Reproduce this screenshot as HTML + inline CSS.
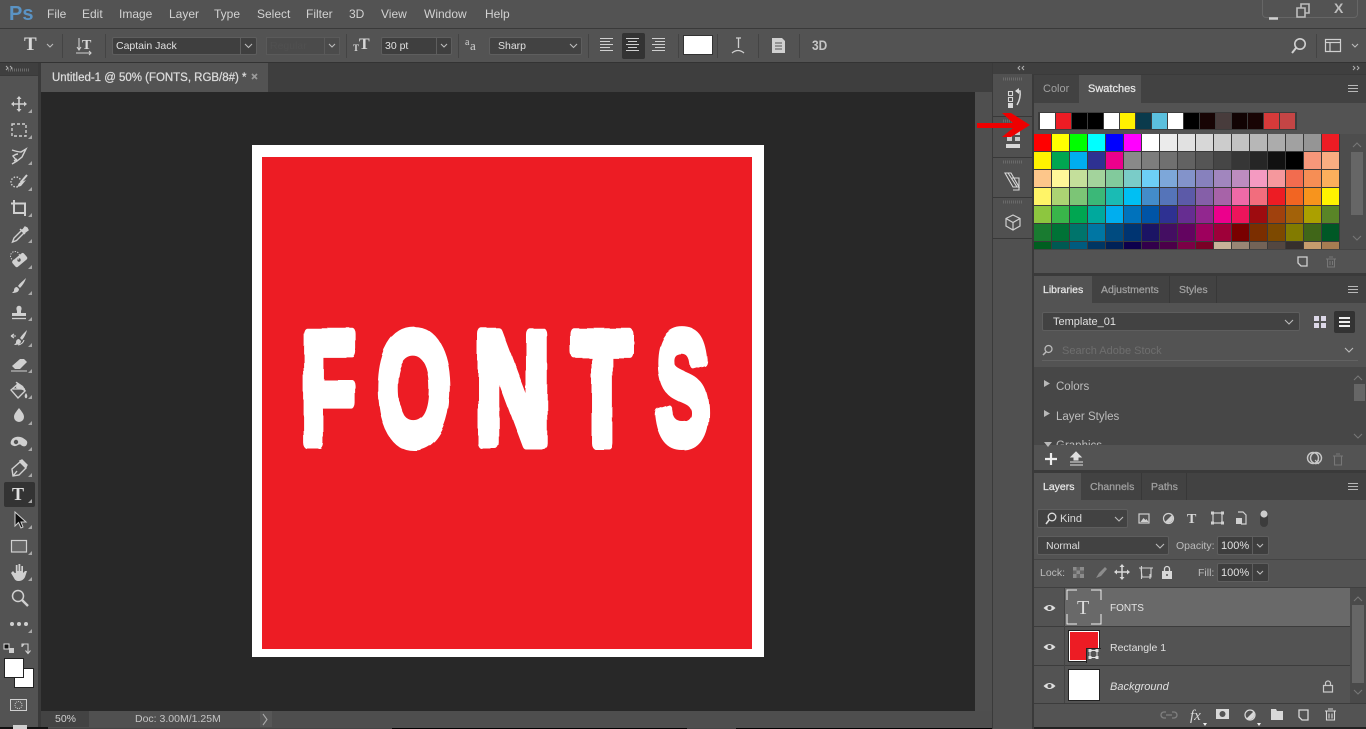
<!DOCTYPE html>
<html><head><meta charset="utf-8"><title>Photoshop</title>
<style>
html,body{margin:0;padding:0;width:1366px;height:729px;overflow:hidden;background:#535353}
body{position:relative;font-family:"Liberation Sans",sans-serif;color:#d4d4d4;font-size:11px}
.a{position:absolute}
.t{position:absolute;white-space:nowrap;line-height:14px}
.m{position:absolute;top:7px;font-size:12px;line-height:14px;color:#d2d2d2;white-space:nowrap}
.dd{position:absolute;background:#424242;border:1px solid #5e5e5e;border-radius:2px;box-sizing:border-box}
.grid{position:absolute;left:1034px;top:134px;width:306px;height:115px;display:grid;grid-template-columns:repeat(17,18px);grid-auto-rows:18px;overflow:hidden;background:#3a3a3a}
.grid i{display:block;margin:0 1px 1px 0}
.rec{position:absolute;left:1038px;top:112px;width:259px;height:18px;background:#3c3c3c;display:flex;padding-left:2px;box-sizing:border-box}
.rec i{display:block;width:15px;height:16px;margin:1px 1px 0 0}
svg{position:absolute;left:0;top:0;overflow:visible}
.tb{font-weight:400;-webkit-text-stroke:.25px currentColor}
</style></head><body>
<!-- structural areas -->
<div class="a" style="left:0;top:0;width:1366px;height:28px;background:#535353"></div>
<div class="a" style="left:0;top:28px;width:1366px;height:1px;background:#3a3a3a"></div>
<div class="a" style="left:0;top:62px;width:1366px;height:1px;background:#333"></div>
<div class="a" style="left:0;top:63px;width:1366px;height:666px;background:#3a3a3a"></div>
<div class="a" style="left:0;top:76px;width:38px;height:653px;background:#535353"></div>
<div class="a" style="left:0;top:63px;width:38px;height:12px;background:#3f3f3f"></div>
<div class="a" style="left:41px;top:63px;width:951px;height:29px;background:#3e3e3e"></div>
<div class="a" style="left:41px;top:63px;width:227px;height:29px;background:#535353"></div>
<div class="a" style="left:41px;top:92px;width:934px;height:619px;background:#282828"></div>
<div class="a" style="left:975px;top:92px;width:17px;height:619px;background:#4f4f4f"></div>
<div class="a" style="left:41px;top:711px;width:951px;height:17px;background:#4e4e4e"></div>
<div class="a" style="left:41px;top:711px;width:48px;height:16px;background:#434343"></div>
<div class="a" style="left:89px;top:711px;width:183px;height:16px;background:#505050"></div>
<div class="a" style="left:260px;top:711px;width:12px;height:16px;background:#575757"></div>
<div class="a" style="left:0;top:727px;width:48px;height:2px;background:#111"></div>
<div class="a" style="left:48px;top:728px;width:944px;height:1px;background:#444"></div>
<div class="a" style="left:392px;top:728px;width:295px;height:1px;background:#000"></div>
<div class="a" style="left:736px;top:728px;width:256px;height:1px;background:#000"></div>
<!-- document -->
<div class="a" style="left:252px;top:145px;width:512px;height:512px;background:#fff"></div>
<div class="a" style="left:262px;top:157px;width:490px;height:492px;background:#ed1c24"></div>
<svg width="1366" height="729" style="left:0;top:0">
<defs><filter id="r" x="-10%" y="-10%" width="120%" height="120%"><feTurbulence type="fractalNoise" baseFrequency="0.03" numOctaves="2" seed="7"/><feDisplacementMap in="SourceGraphic" scale="4.500"/></filter></defs>
<g filter="url(#r)" fill="#fff" stroke="#fff" stroke-width="12" stroke-linejoin="round" font-family="Liberation Sans" font-weight="700" font-size="158">
<text transform="translate(301 443) scale(.57 1)">F</text>
<text transform="translate(377 443) scale(.6 1)">O</text>
<text transform="translate(475 443) scale(.66 1)">N</text>
<text transform="translate(573 443) scale(.6 1)">T</text>
<text transform="translate(656 443) scale(.5 1)">S</text>
</g></svg>
<!-- dock -->
<div class="a" style="left:993px;top:63px;width:373px;height:11px;background:#3f3f3f"></div>
<div class="a" style="left:993px;top:74px;width:39px;height:655px;background:#505050"></div>
<div class="a" style="left:993px;top:116px;width:39px;height:1px;background:#383838"></div>
<div class="a" style="left:993px;top:157px;width:39px;height:1px;background:#383838"></div>
<div class="a" style="left:993px;top:197px;width:39px;height:1px;background:#383838"></div>
<div class="a" style="left:993px;top:238px;width:39px;height:1px;background:#383838"></div>
<!-- color/swatches panel -->
<div class="a" style="left:1034px;top:75px;width:332px;height:198px;background:#535353"></div>
<div class="a" style="left:1034px;top:75px;width:332px;height:28px;background:#424242"></div>
<div class="a" style="left:1079px;top:75px;width:62px;height:28px;background:#535353"></div>
<div class="t" style="left:1043px;top:82px;color:#a0a0a0;font-size:11px">Color</div>
<div class="t tb" style="left:1088px;top:82px;color:#e6e6e6;font-size:11px">Swatches</div>
<div class="rec"><i style="background:#fff"></i><i style="background:#ed1c24"></i><i style="background:#000"></i><i style="background:#000"></i><i style="background:#fff"></i><i style="background:#fff200"></i><i style="background:#0a3a4c"></i><i style="background:#5bc0de"></i><i style="background:#fff"></i><i style="background:#000"></i><i style="background:#170404"></i><i style="background:#483c3c"></i><i style="background:#110303"></i><i style="background:#180404"></i><i style="background:#d63a3a"></i><i style="background:#c44545"></i></div>
<div class="grid">
<i style="background:#f00"></i><i style="background:#ff0"></i><i style="background:#0f0"></i><i style="background:#0ff"></i><i style="background:#00f"></i><i style="background:#f0f"></i><i style="background:#fff"></i><i style="background:#ebebeb"></i><i style="background:#e1e1e1"></i><i style="background:#d7d7d7"></i><i style="background:#ccc"></i><i style="background:#c2c2c2"></i><i style="background:#b7b7b7"></i><i style="background:#acacac"></i><i style="background:#a1a1a1"></i><i style="background:#959595"></i><i style="background:#ed1c24"></i>
<i style="background:#fff200"></i><i style="background:#00a651"></i><i style="background:#00aeef"></i><i style="background:#2e3192"></i><i style="background:#ec008c"></i><i style="background:#898989"></i><i style="background:#7d7d7d"></i><i style="background:#707070"></i><i style="background:#626262"></i><i style="background:#555"></i><i style="background:#464646"></i><i style="background:#363636"></i><i style="background:#262626"></i><i style="background:#111"></i><i style="background:#000"></i><i style="background:#f7977a"></i><i style="background:#f9ad81"></i>
<i style="background:#fdc68a"></i><i style="background:#fff799"></i><i style="background:#c4df9b"></i><i style="background:#a3d39c"></i><i style="background:#82ca9c"></i><i style="background:#7accc8"></i><i style="background:#6dcff6"></i><i style="background:#7da7d9"></i><i style="background:#8393ca"></i><i style="background:#8781bd"></i><i style="background:#a186be"></i><i style="background:#bd8cbf"></i><i style="background:#f49ac1"></i><i style="background:#f5989d"></i><i style="background:#f26c4f"></i><i style="background:#f68e55"></i><i style="background:#fbaf5c"></i>
<i style="background:#fff467"></i><i style="background:#acd373"></i><i style="background:#7cc576"></i><i style="background:#3bb878"></i><i style="background:#1abbb4"></i><i style="background:#00bff3"></i><i style="background:#438cca"></i><i style="background:#5574b9"></i><i style="background:#5c5aa8"></i><i style="background:#855fa8"></i><i style="background:#a763a8"></i><i style="background:#ee6aa7"></i><i style="background:#f26d7d"></i><i style="background:#ed1c24"></i><i style="background:#f26522"></i><i style="background:#f7941d"></i><i style="background:#fff200"></i>
<i style="background:#8dc63f"></i><i style="background:#39b54a"></i><i style="background:#00a651"></i><i style="background:#00a99d"></i><i style="background:#00aeef"></i><i style="background:#0072bc"></i><i style="background:#0054a6"></i><i style="background:#2e3192"></i><i style="background:#662d91"></i><i style="background:#92278f"></i><i style="background:#ec008c"></i><i style="background:#ed145b"></i><i style="background:#9e0b0f"></i><i style="background:#a0410d"></i><i style="background:#a36209"></i><i style="background:#aba000"></i><i style="background:#598527"></i>
<i style="background:#197b30"></i><i style="background:#007236"></i><i style="background:#00746b"></i><i style="background:#0076a3"></i><i style="background:#004b80"></i><i style="background:#003471"></i><i style="background:#1b1464"></i><i style="background:#440e62"></i><i style="background:#630460"></i><i style="background:#9e005d"></i><i style="background:#9e0039"></i><i style="background:#790000"></i><i style="background:#7b2e00"></i><i style="background:#7d4900"></i><i style="background:#827b00"></i><i style="background:#406618"></i><i style="background:#005826"></i>
<i style="background:#005e20"></i><i style="background:#005952"></i><i style="background:#005b7f"></i><i style="background:#003663"></i><i style="background:#002157"></i><i style="background:#0d004c"></i><i style="background:#32004b"></i><i style="background:#4b0049"></i><i style="background:#7b0046"></i><i style="background:#7a0026"></i><i style="background:#c7b299"></i><i style="background:#998675"></i><i style="background:#736357"></i><i style="background:#534741"></i><i style="background:#362f2d"></i><i style="background:#c69c6d"></i><i style="background:#a67c52"></i>
</div>
<div class="a" style="left:1340px;top:134px;width:26px;height:115px;background:#4d4d4d"></div>
<div class="a" style="left:1351px;top:152px;width:12px;height:63px;background:#666"></div>
<div class="a" style="left:1034px;top:249px;width:332px;height:1px;background:#444"></div>
<!-- libraries panel -->
<div class="a" style="left:1034px;top:276px;width:332px;height:194px;background:#535353"></div>
<div class="a" style="left:1034px;top:276px;width:332px;height:27px;background:#424242"></div>
<div class="a" style="left:1034px;top:276px;width:58px;height:27px;background:#535353"></div>
<div class="a" style="left:1169px;top:276px;width:1px;height:27px;background:#383838"></div>
<div class="a" style="left:1216px;top:276px;width:1px;height:27px;background:#383838"></div>
<div class="t tb" style="left:1043px;top:283px;color:#e6e6e6;font-size:10.500px">Libraries</div>
<div class="t tb" style="left:1101px;top:283px;color:#a0a0a0;font-size:10.500px">Adjustments</div>
<div class="t tb" style="left:1179px;top:283px;color:#a0a0a0;font-size:10.500px">Styles</div>
<div class="dd" style="left:1042px;top:312px;width:258px;height:19px"></div>
<div class="t" style="left:1053px;top:315px;font-size:11px;color:#e0e0e0">Template_01</div>
<div class="a" style="left:1334px;top:311px;width:21px;height:22px;background:#333;border-radius:2px"></div>
<div class="t" style="left:1062px;top:344px;color:#6e6e6e;font-size:11px">Search Adobe Stock</div>
<div class="a" style="left:1042px;top:360px;width:316px;height:1px;background:#626262"></div>
<div class="a" style="left:1034px;top:367px;width:332px;height:78px;background:#474747;overflow:hidden">
<div class="t" style="left:22px;top:13px;color:#bdbdbd;font-size:11.500px">Colors</div>
<div class="t" style="left:22px;top:43px;color:#bdbdbd;font-size:11.500px">Layer Styles</div>
<div class="t" style="left:22px;top:72px;color:#bdbdbd;font-size:11.500px">Graphics</div>
</div>
<div class="a" style="left:1354px;top:384px;width:11px;height:17px;background:#666"></div>
<!-- layers panel -->
<div class="a" style="left:1034px;top:473px;width:332px;height:254px;background:#535353"></div>
<div class="a" style="left:1034px;top:473px;width:332px;height:27px;background:#424242"></div>
<div class="a" style="left:1034px;top:473px;width:47px;height:27px;background:#535353"></div>
<div class="a" style="left:1141px;top:473px;width:1px;height:27px;background:#383838"></div>
<div class="a" style="left:1186px;top:473px;width:1px;height:27px;background:#383838"></div>
<div class="t tb" style="left:1043px;top:480px;color:#e6e6e6;font-size:10.500px">Layers</div>
<div class="t tb" style="left:1090px;top:480px;color:#a0a0a0;font-size:10.500px">Channels</div>
<div class="t tb" style="left:1151px;top:480px;color:#a0a0a0;font-size:10.500px">Paths</div>
<div class="dd" style="left:1037px;top:509px;width:91px;height:19px"></div>
<div class="t" style="left:1060px;top:512px;color:#dcdcdc">Kind</div>
<div class="dd" style="left:1037px;top:536px;width:132px;height:19px"></div>
<div class="t" style="left:1046px;top:539px;color:#dcdcdc;font-size:10.500px">Normal</div>
<div class="t" style="left:1176px;top:539px;color:#bcbcbc;font-size:10.500px">Opacity:</div>
<div class="dd" style="left:1217px;top:536px;width:52px;height:19px;background:#3e3e3e"></div>
<div class="t" style="left:1221px;top:539px;color:#e0e0e0">100%</div>
<div class="a" style="left:1252px;top:537px;width:1px;height:17px;background:#5e5e5e"></div>
<div class="a" style="left:1034px;top:559px;width:332px;height:1px;background:#444"></div>
<div class="t" style="left:1040px;top:566px;color:#bcbcbc;font-size:10.500px">Lock:</div>
<div class="t" style="left:1198px;top:566px;color:#bcbcbc;font-size:10.500px">Fill:</div>
<div class="dd" style="left:1217px;top:563px;width:52px;height:19px;background:#3e3e3e"></div>
<div class="t" style="left:1221px;top:566px;color:#e0e0e0">100%</div>
<div class="a" style="left:1252px;top:564px;width:1px;height:17px;background:#5e5e5e"></div>
<div class="a" style="left:1034px;top:587px;width:332px;height:1px;background:#404040"></div>
<div class="a" style="left:1065px;top:588px;width:285px;height:38px;background:#696969"></div>
<div class="a" style="left:1034px;top:626px;width:316px;height:1px;background:#3c3c3c"></div>
<div class="a" style="left:1034px;top:665px;width:316px;height:1px;background:#3c3c3c"></div>
<div class="a" style="left:1034px;top:703px;width:332px;height:1px;background:#3c3c3c"></div>
<div class="a" style="left:1064px;top:588px;width:1px;height:115px;background:#434343"></div>
<div class="a" style="left:1350px;top:588px;width:16px;height:115px;background:#4a4a4a"></div>
<div class="a" style="left:1352px;top:605px;width:12px;height:78px;background:#666"></div>
<div class="a" style="left:1069px;top:631px;width:30px;height:30px;background:#ed1c24;border:1px solid #fff;outline:1px solid #222;box-sizing:border-box"></div>
<div class="a" style="left:1086px;top:648px;width:15px;height:15px;background:#535353;border-left:1px solid #222;border-top:1px solid #222;box-sizing:border-box"></div>
<div class="a" style="left:1069px;top:670px;width:30px;height:30px;background:#fff;outline:1px solid #222"></div>
<div class="t" style="left:1110px;top:602px;color:#e4e4e4;font-size:10px">FONTS</div>
<div class="t" style="left:1110px;top:641px;color:#e0e0e0;font-size:10.500px">Rectangle 1</div>
<div class="t" style="left:1110px;top:680px;color:#e0e0e0;font-size:11px;font-style:italic">Background</div>
<div class="a" style="left:1034px;top:727px;width:332px;height:2px;background:#222"></div>
<!-- menu -->
<div class="t" style="left:9px;top:2px;font-size:20px;line-height:24px;font-weight:700;color:#5a93c4">Ps</div>
<div class="m" style="left:47px">File</div><div class="m" style="left:82px">Edit</div><div class="m" style="left:119px">Image</div><div class="m" style="left:169px">Layer</div><div class="m" style="left:214px">Type</div><div class="m" style="left:257px">Select</div><div class="m" style="left:306px">Filter</div><div class="m" style="left:349px">3D</div><div class="m" style="left:381px">View</div><div class="m" style="left:424px">Window</div><div class="m" style="left:485px">Help</div>
<div class="a" style="left:1262px;top:0;width:96px;height:18px;border:1px solid #666;border-top:0;border-radius:0 0 4px 4px;box-sizing:border-box"></div>
<div class="t" style="left:1334px;top:1px;font-size:14px;font-weight:700;color:#bdbdbd">X</div>
<!-- options -->
<div class="t" style="left:24px;top:35px;font:700 19px/20px 'Liberation Serif',serif;color:#d8d8d8">T</div>
<div class="a" style="left:112px;top:37px;width:145px;height:18px;background:#3f3f3f;border:1px solid #5e5e5e;box-sizing:border-box;border-radius:2px"></div>
<div class="a" style="left:240px;top:38px;width:1px;height:16px;background:#5e5e5e"></div>
<div class="t" style="left:116px;top:39px;color:#e0e0e0;font-size:10.500px">Captain Jack</div>
<div class="a" style="left:266px;top:37px;width:74px;height:18px;background:#4b4b4b;border:1px solid #5a5a5a;box-sizing:border-box"></div>
<div class="t" style="left:270px;top:39px;color:#505050;font-size:10.500px">Regular</div>
<div class="a" style="left:324px;top:38px;width:1px;height:16px;background:#5a5a5a"></div>
<div class="t" style="left:353px;top:42px;font:700 9px/12px 'Liberation Serif',serif;color:#d8d8d8">T</div>
<div class="t" style="left:359px;top:36px;font:700 16px/18px 'Liberation Serif',serif;color:#d8d8d8">T</div>
<div class="a" style="left:381px;top:37px;width:71px;height:18px;background:#3f3f3f;border:1px solid #5e5e5e;box-sizing:border-box;border-radius:2px"></div>
<div class="a" style="left:436px;top:38px;width:1px;height:16px;background:#5e5e5e"></div>
<div class="t" style="left:385px;top:39px;color:#e0e0e0;font-size:10.500px">30 pt</div>
<div class="t" style="left:465px;top:37px;font:10px/12px 'Liberation Serif',serif;color:#d0d0d0">a</div>
<div class="t" style="left:470px;top:39px;font:13px/14px 'Liberation Serif',serif;color:#d0d0d0">a</div>
<div class="a" style="left:489px;top:37px;width:93px;height:18px;background:#424242;border:1px solid #5e5e5e;box-sizing:border-box;border-radius:2px"></div>
<div class="t" style="left:498px;top:39px;color:#e0e0e0;font-size:10.500px">Sharp</div>
<div class="a" style="left:622px;top:33px;width:23px;height:26px;background:#333;border-radius:2px"></div>
<div class="a" style="left:684px;top:36px;width:28px;height:18px;background:#fff;outline:1px solid #333"></div>
<div class="t" style="left:812px;top:37px;font-size:14px;line-height:16px;font-weight:700;color:#c6c6c6;transform:scaleX(.85);transform-origin:left">3D</div>
<!-- tab + status -->
<div class="t tb" style="left:52px;top:71px;font-size:11.500px;color:#dcdcdc;letter-spacing:-.02px">Untitled-1 @ 50% (FONTS, RGB/8#) *</div>
<div class="t" style="left:55px;top:712px;font-size:10.500px;color:#d0d0d0">50%</div>
<div class="t" style="left:135px;top:712px;font-size:10.500px;color:#c4c4c4">Doc: 3.00M/1.25M</div>
<!-- tool T -->
<div class="a" style="left:4px;top:482px;width:31px;height:25px;background:#333;border-radius:2px"></div>
<div class="t" style="left:12px;top:483px;font:700 18px/22px 'Liberation Serif',serif;color:#e0e0e0">T</div>
<!-- fg/bg -->
<div class="a" style="left:15px;top:669px;width:18px;height:18px;background:#fff;outline:1px solid #222"></div>
<div class="a" style="left:5px;top:659px;width:18px;height:18px;background:#fff;outline:1px solid #222"></div>
<div class="a" style="left:10px;top:699px;width:17px;height:12px;background:#5a5a5a;border:1px solid #d0d0d0;box-sizing:border-box"></div>
<div class="a" style="left:13px;top:725px;width:14px;height:4px;background:#d0d0d0"></div>
<!-- icons -->
<svg width="1366" height="729" fill="none" stroke="#d0d0d0" stroke-width="1.400">
<!-- window controls -->
<path d="M1269 18.500h9" stroke-width="2.500"/>
<path d="M1297 8h8v9h-8zM1301 8V4h8v9h-4" stroke-width="1.600" stroke="#bdbdbd"/>
<!-- option bar separators -->
<g stroke="#444" stroke-width="1"><path d="M62.500 34V58M105.500 34V58M346.500 34V58M458.500 34V58M588.500 34V58M678.500 34V58M717.500 34V58M758.500 34V58M799.500 34V58M1316.500 34V58"/></g>
<g stroke="#bcbcbc" stroke-width="1.100">
<path d="M47 44l3 3 3-3M245 44l3.500 3.500 3.500-3.500M329 44l3 3 3-3M441 44l3 3 3-3M570 44l3.500 3.500 3.500-3.500M1352 44l3 3 3-3M1285 320l4 4 4-4M1345 348l4 4 4-4M1115 517l4 4 4-4M1156 544l4 4 4-4M1257 544l3 3 3-3M1257 571l3 3 3-3"/>
<path d="M1353 147l4-4 4 4M1353 236l4 4 4-4M1354 380l4-4 4 4M1354 434l4 4 4-4M1354 601l4-4 4 4M1354 690l4 4 4-4" stroke="#777"/>
</g>
<!-- orientation -->
<path d="M79 38v12M77 47l2 3 2-3M76 53h15M89 51l2 2-2 2" stroke-width="1.100"/>
<text x="82" y="49" font-family="Liberation Serif" font-weight="700" font-size="14" fill="#d8d8d8" stroke="none">T</text>
<!-- aligns -->
<g stroke="#d0d0d0" stroke-width="1"><path d="M600 38.500h13M600 41.500h10M600 44.500h13M600 47.500h10M600 50.500h13"/><path d="M626 38.500h13M628 41.500h9M626 44.500h13M628 47.500h9M626 50.500h13"/><path d="M652 38.500h13M655 41.500h10M652 44.500h13M655 47.500h10M652 50.500h13"/></g>
<!-- warp -->
<path d="M736 38h5M738.500 38v10M732 53q6-5 12 0" stroke-width="1.300"/>
<!-- panels icon -->
<path d="M772 38h10l3 3v12h-13z" fill="#d0d0d0" stroke="none"/>
<path d="M775 43h7M775 46h7M775 49h7" stroke="#535353" stroke-width="1"/>
<!-- search + workspace -->
<circle cx="1300" cy="44" r="5.200" stroke-width="1.600"/><path d="M1296 48l-4 5" stroke-width="2"/>
<path d="M1325.500 39.500h15v12h-15zM1325.500 42.500h15M1330 42.500v9" stroke-width="1.200"/>
<!-- collapse chevrons -->
<g stroke="#b0b0b0" stroke-width="1"><path d="M6 66l2 2-2 2M10 66l2 2-2 2M1020 66l-2 2 2 2M1024 66l-2 2 2 2M1353 66l2 2-2 2M1357 66l2 2-2 2"/></g>
<path d="M252 74l5 5M257 74l-5 5" stroke="#9a9a9a" stroke-width="1.700"/>
<path d="M263 714l4 5.500-4 5.500" stroke="#a8a8a8" stroke-width="1.100"/>
<!-- TOOLS -->
<g stroke="#d0d0d0" stroke-width="1.400">
<g transform="translate(19 104)"><path d="M-6 0H6M0-6V6" stroke-width="1.600"/><path d="M0-8l-2.500 3h5zM0 8l-2.500-3h5zM-8 0l3-2.500v5zM8 0l-3-2.500v5z" fill="#d0d0d0" stroke="none"/></g>
<rect x="12" y="124" width="14" height="12" stroke-dasharray="3 2"/>
<g transform="translate(19 156)"><path d="M-7-6q6 2 9 2l5-3-4 8-5 4-4-5q3-2 5-2M-5 5l3-2M-7 8l5-3" /></g>
<g transform="translate(19 182)"><circle cx="-3" cy="0" r="5" stroke-dasharray="1.500 1.500"/><path d="M8-7L1 0M0 1l-2 4 4-1 5-6z" fill="#d0d0d0" stroke="none"/><path d="M8-7L2 0" stroke-width="2"/></g>
<g transform="translate(19 208)" stroke-width="2"><path d="M-5-8V5H7M-8-4.500H6V8"/></g>
<g transform="translate(19 234)"><path d="M3-4l-8 8-1.500 4 4-1.500 8-8z"/><path d="M1-5l5 5M3-3l3-4 2 1 1 2-4 3z" fill="#d0d0d0"/></g>
<g transform="translate(19 260)"><rect x="-7" y="-3.500" width="15" height="8" rx="2" fill="#d0d0d0" stroke="none" transform="rotate(-40 0 0)"/><circle cx="0" cy="0" r="1.700" fill="#535353" stroke="none"/><circle cx="-4" cy="-4" r="4.500" stroke-dasharray="1.300 1.300" stroke-width="1"/></g>
<g transform="translate(19 286)"><path d="M7-8C4-5 1-3-1 0l2 2C3 0 6-4 7-8zM-2 1c-3 0-3 3-3 4l-2 2c4 0 7-1 7-4z" fill="#d0d0d0" stroke="none"/></g>
<g transform="translate(19 312)"><path d="M-2-1C-5-8 5-8 2-1v2H7V4H-7V1H-2z" fill="#d0d0d0" stroke="none"/><path d="M-7 6.500H7" stroke-width="1.300"/></g>
<g transform="translate(19 338)"><path d="M8-8C5-5 3-3 1 0l2 2C5 0 7-4 8-8zM0 1c-3 0-3 3-3 4l-2 2c4 0 7-1 7-4z" fill="#d0d0d0" stroke="none"/><path d="M-8-2h5M-8-2l3-2M-8-2l3 2M-1 7q5-1 6-5" stroke-width="1.100"/></g>
<g transform="translate(19 364)"><path d="M-7 2L1-5h4l3 3-7 7h-5z" fill="#d0d0d0" stroke="none"/><path d="M-8 7H8M-3 0l4 4" stroke-width="1"/></g>
<g transform="translate(19 390)"><path d="M-8 0L-1-6 6 1-1 8z"/><path d="M-3-8l2 2M-6-1h12" stroke-width="1.200"/><path d="M7 3q2 3 1 4.500t-2 0q-1-2 1-4.500zM-2-8l6 4 3 5-10-3z" fill="#d0d0d0" stroke="none"/></g>
<path d="M19 408c-3 4-5 6-5 9a5 5 0 0 0 10 0c0-3-2-5-5-9z" fill="#d0d0d0" stroke="none"/>
<g transform="translate(19 442)"><path d="M-8-1C-6-6 1-6 4-4S9-1 8 2 4 5 2 3-2 5-5 4-9 2-8-1z" fill="#d0d0d0" stroke="none"/><circle cx="-3" cy="0" r="2.200" fill="#535353" stroke="none"/></g>
<g transform="translate(19 468)"><path d="M-6 8L-7 1 1-6l6 6-7 7zM-6 8L-2 3"/><path d="M3-8l5 5-1 2-6-6z" fill="#d0d0d0"/></g>
<g transform="translate(15 512)"><path d="M0 0V14L3.500 10.500 6 16 8 15 6 10H11z" fill="#111" stroke="#d0d0d0" stroke-width="1"/></g>
<rect x="11.500" y="540.500" width="15" height="11.500" fill="#666" stroke-width="1.200"/>
<g transform="translate(19 572)"><path d="M-8 1l3 5c1 2 2 3 5 3s5-2 6-4l2-6h-2l-2 2V-6h-1.700v5h-1V-8H-.5v7h-1v-6H-3.200v8h-1L-6-1z" fill="#d0d0d0" stroke="none"/></g>
<g transform="translate(18 596)"><circle cx="0" cy="0" r="5.500" stroke-width="1.500"/><path d="M4 4l6 6" stroke-width="2.400"/></g>
<g fill="#d0d0d0" stroke="none"><circle cx="12" cy="624" r="2"/><circle cx="19" cy="624" r="2"/><circle cx="26" cy="624" r="2"/></g>
<g fill="#a8a8a8" stroke="none">
<path d="M32 109v4h-4zM32 135v4h-4zM32 161v4h-4zM32 187v4h-4zM32 213v4h-4zM32 239v4h-4zM32 265v4h-4zM32 291v4h-4zM32 317v4h-4zM32 343v4h-4zM32 369v4h-4zM32 395v4h-4zM32 421v4h-4zM32 447v4h-4zM32 473v4h-4zM32 499v4h-4zM32 525v4h-4zM32 551v4h-4zM32 577v4h-4zM32 629v4h-4z"/></g>
<rect x="4" y="644" width="5" height="5" fill="#111" stroke="#ddd" stroke-width="1"/><rect x="9" y="648" width="5" height="5" fill="#ccc" stroke="none"/>
<path d="M24 644h-2v3M28 653v-9h-5M25.500 650.500l2.500 3 2.500-3M22 646.500l2-2.500" stroke-width="1.100"/>
<circle cx="18.500" cy="705" r="3.500" stroke-dasharray="1 1" stroke-width="1"/>
</g>
<!-- grips -->
<g stroke="#6a6a6a" stroke-width="3" stroke-dasharray="1 1"><path d="M1003 79h20M1003 121h20M1003 162h20M1003 202h20M8 70h22" /></g>
<!-- dock icons -->
<g stroke="#d8d8d8" stroke-width="1.100">
<path d="M1008.500 91.500h4v4h-4zM1008.500 97.500h4v4h-4z"/><path d="M1008 103h5v5h-5z" fill="#d8d8d8" stroke="none"/>
<path d="M1016 91l4 0q1 7-3 14" stroke-width="1.500"/><path d="M1015 91l4-3v6z" fill="#d8d8d8" stroke="none"/>
<path d="M1005 173h6l8 14h-6zM1008 173l9 14M1012 178h7v12h-6"/>
<path d="M1013 215l7 3.500v7.500l-7 4-7-4v-7.500zM1006 218.500l7 4 7-4M1013 222.500v7.500" stroke="#cfcfcf" stroke-width="1.200"/>
<path d="M1007 133l5 2v6h-5zM1015 131h5v4h-5zM1015 137h5v4h-5z" fill="#c8c8c8" stroke="none"/><path d="M1006 144h14v4h-14z" fill="#d8d8d8" stroke="none"/>
</g>
<!-- red arrow -->
<path d="M977 123H1013L1002 113H1011L1030 125 1011 137H1002L1013 128H977z" fill="#ee0000" stroke="none"/>
<!-- panel menus -->
<g stroke="#b8b8b8" stroke-width="1"><path d="M1348 85.500h10M1348 88.500h10M1348 91.500h10M1348 286.500h10M1348 289.500h10M1348 292.500h10M1348 483.500h10M1348 486.500h10M1348 489.500h10"/></g>
<!-- swatch footer -->
<path d="M1298 257h9v9h-6l-3-3z" stroke="#d0d0d0" stroke-width="1.300"/>
<path d="M1326 259h10M1327.500 259v8h7v-8M1329 257h4M1330 261v4M1332.500 261v4" stroke="#777" stroke-width="1"/>
<!-- libraries icons -->
<g fill="#ddd8e8" stroke="none"><path d="M1314 316h5v5h-5zM1321 316h5v5h-5zM1314 323h5v5h-5zM1321 323h5v5h-5z"/></g>
<path d="M1339 318h11M1339 322h11M1339 326h11" stroke="#eee" stroke-width="2"/>
<circle cx="1048.500" cy="349" r="3.500" stroke="#bbb" stroke-width="1.300"/><path d="M1046 352l-3 3" stroke="#bbb" stroke-width="1.500"/>
<path d="M1044 380v7l6-3.500zM1044 410v7l6-3.500z" fill="#b8b8b8" stroke="none"/>
<path d="M1044 442h8l-4 5z" fill="#b8b8b8" stroke="none"/>
<path d="M1051 453v12M1045 459h12" stroke="#eee" stroke-width="2.200"/>
<path d="M1076 452l-5 5h3v3h4v-3h3zM1070 462h13M1070 465h13" fill="#e0e0e0" stroke="#e0e0e0" stroke-width="1"/>
<g stroke="#c8c8c8" stroke-width="1.400"><circle cx="1313" cy="458" r="5.500"/><circle cx="1316" cy="458" r="5.500"/><path d="M1315 460l4 4M1319 460l-4 4" stroke-width="1.100"/></g>
<path d="M1333 456h10M1334.500 456v9h7v-9M1336 454h4" stroke="#777" stroke-width="1.100"/>
<!-- kind row -->
<circle cx="1052" cy="517" r="3.800" stroke="#ddd" stroke-width="1.300"/><path d="M1049 520l-3 4" stroke="#ddd" stroke-width="1.600"/>
<g stroke="#d0d0d0" stroke-width="1.200">
<rect x="1139" y="514" width="10" height="9"/><path d="M1140.500 522l3-4 2 2 1-1 2 3z" fill="#d0d0d0" stroke="none"/>
<circle cx="1168.500" cy="518.500" r="5" /><path d="M1172 515a5 5 0 0 1-7 7z" fill="#d0d0d0" stroke="none"/>
<path d="M1213 513h9v10h-9z"/><g fill="#d0d0d0" stroke="none"><rect x="1211" y="511.500" width="3" height="3"/><rect x="1221" y="511.500" width="3" height="3"/><rect x="1211" y="521.500" width="3" height="3"/><rect x="1221" y="521.500" width="3" height="3"/></g>
<path d="M1238 512h5l3 3v9h-5" /><path d="M1236 518h6v6h-6z" fill="#d0d0d0" stroke="none"/>
</g>
<text x="1187" y="523" font-family="Liberation Serif" font-weight="700" font-size="14" fill="#d8d8d8" stroke="none">T</text>
<rect x="1260" y="510" width="8" height="17" rx="4" fill="#3c3c3c" stroke="none"/><circle cx="1264" cy="514" r="3.600" fill="#ccc" stroke="none"/>
<!-- lock row -->
<g fill="#8c8c8c" stroke="none"><path d="M1073 567h11v11h-11z" fill="#666"/><path d="M1073 567h3.500v3.500h-3.500zM1080 567h4v3.500h-4zM1076.500 570.500h3.500v3.500h-3.500zM1073 574h3.500v4h-3.500zM1080 574h4v4h-4z"/></g>
<path d="M1105 567l-6 6-3 5 5-2 6-7z" fill="#8c8c8c" stroke="none"/>
<path d="M1116 572h12M1122 566v12" stroke="#d8d8d8" stroke-width="1.500"/><path d="M1122 564l-2.500 3h5zM1122 580l-2.500-3h5zM1114 572l3-2.500v5zM1130 572l-3-2.500v5z" fill="#d8d8d8" stroke="none"/>
<path d="M1141 568h10v9h-9zM1139 568h14M1141.500 566v13M1150 574v5" stroke="#d0d0d0" stroke-width="1.100"/>
<path d="M1164.500 571v-2a2.500 2.500 0 0 1 5 0v2" fill="none" stroke="#d8d8d8" stroke-width="1.300"/><path d="M1162 571h10v8h-10z" fill="#d8d8d8" stroke="none"/><circle cx="1167" cy="575" r="1" fill="#535353" stroke="none"/>
<!-- thumb corners -->
<path d="M1067 600V590H1077M1091 590H1101V600M1101 614V624H1091M1077 624H1067V614" stroke="#f0f0f0" stroke-width="1"/>
<text x="1077" y="614" font-family="Liberation Serif" font-size="20" fill="#dcdcdc" stroke="none">T</text>
<path d="M1090 650.500h7v7h-7z" stroke="#e0e0e0" stroke-width="1"/><g fill="#e0e0e0" stroke="none"><rect x="1088.500" y="649" width="3" height="3"/><rect x="1095.500" y="649" width="3" height="3"/><rect x="1088.500" y="656" width="3" height="3"/><rect x="1095.500" y="656" width="3" height="3"/></g>
<!-- eyes -->
<g><path d="M1043.500 608q6-6 12 0q-6 6-12 0z" fill="#e0e0e0" stroke="none"/><circle cx="1049.500" cy="608" r="2" fill="#535353" stroke="none"/>
<path d="M1043.500 647q6-6 12 0q-6 6-12 0z" fill="#e0e0e0" stroke="none"/><circle cx="1049.500" cy="647" r="2" fill="#535353" stroke="none"/>
<path d="M1043.500 686q6-6 12 0q-6 6-12 0z" fill="#e0e0e0" stroke="none"/><circle cx="1049.500" cy="686" r="2" fill="#535353" stroke="none"/></g>
<path d="M1323.500 685.500h9v6.500h-9zM1325.500 685.500v-2a2.500 2.500 0 0 1 5 0v2" stroke="#c8c8c8" stroke-width="1.200"/>
<!-- layer footer -->
<path d="M1166 712h-2a3 3 0 0 0 0 6h2M1172 712h2a3 3 0 0 1 0 6h-2M1166 715h6" stroke="#808080" stroke-width="1.300"/>
<text x="1190" y="720" font-family="Liberation Serif" font-style="italic" font-size="15" fill="#d8d8d8" stroke="none">fx</text>
<path d="M1216 709h13v10h-13z" fill="#d8d8d8" stroke="none"/><circle cx="1222.500" cy="714" r="3" fill="#535353" stroke="none"/>
<circle cx="1250" cy="715" r="5" stroke="#d8d8d8" stroke-width="1.200"/><path d="M1253.500 711.500a5 5 0 0 1-7 7z" fill="#d8d8d8" stroke="none"/>
<path d="M1271 709h5l1 2h6v9h-12z" fill="#d8d8d8" stroke="none"/>
<path d="M1299 710h9v10h-6l-3-3z" stroke="#d8d8d8" stroke-width="1.300"/>
<path d="M1325 711h11M1326.500 711v9h8v-9M1328 709h5M1329 713.500v5M1332 713.500v5" stroke="#d8d8d8" stroke-width="1.100"/>
<path d="M1203 723h4l-2 3zM1257 723h4l-2 3z" fill="#eee" stroke="none"/>
</svg>
</body></html>
